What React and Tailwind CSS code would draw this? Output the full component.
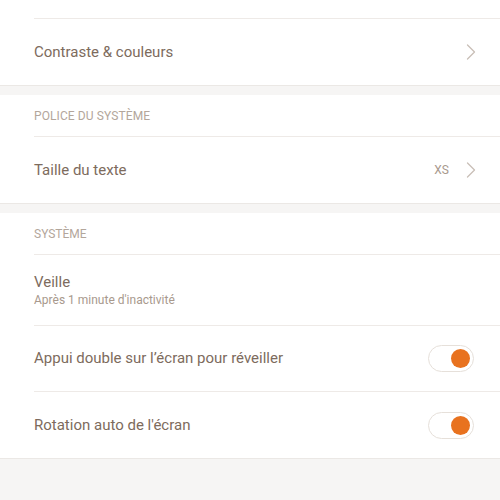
import React from "react";

const Chevron = () => (
  <svg width="10" height="16" viewBox="0 0 10 16" fill="none" className="ml-4">
    <path d="M1.5 1 L8.5 8 L1.5 15" stroke="#c9bfb7" strokeWidth="1.3" strokeLinecap="round" strokeLinejoin="round" />
  </svg>
);

const Toggle = () => (
  <div className="w-[46px] h-[27px] rounded-full border border-[#e6e0da] bg-white flex items-center justify-end pr-[3px]">
    <div className="w-[19px] h-[19px] rounded-full bg-[#e8721f]" />
  </div>
);

const Divider = () => <div className="ml-[34px] h-px bg-[#eeeae7]" />;

export default function App() {
  return (
    <div className="w-[500px] h-[500px] overflow-hidden bg-[#f6f5f4] text-[#7d6b5d]" style={{ fontFamily: "Roboto, 'Noto Sans', sans-serif" }}>
      <div className="bg-white border-b border-[#ebe8e5]">
        <div className="h-[18px]" />
        <Divider />
        <div className="h-[66px] pl-[34px] pr-[24px] flex items-center justify-between">
          <span className="text-[15px]">Contraste &amp; couleurs</span>
          <Chevron />
        </div>
      </div>
      <div className="h-[9px]" />
      <div className="bg-white border-b border-[#ebe8e5]">
        <div className="h-[41px] pl-[34px] flex items-center text-[12px] text-[#b3a69b] tracking-[0.1px]">POLICE DU SYSTÈME</div>
        <Divider />
        <div className="h-[66px] pl-[34px] pr-[24px] flex items-center justify-between">
          <span className="text-[15px]">Taille du texte</span>
          <div className="flex items-center">
            <span className="text-[12px] text-[#a8998d] mr-[1px]">XS</span>
            <Chevron />
          </div>
        </div>
      </div>
      <div className="h-[9px]" />
      <div className="bg-white border-b border-[#ebe8e5]">
        <div className="h-[41px] pl-[34px] flex items-center text-[12px] text-[#b3a69b]">SYSTÈME</div>
        <Divider />
        <div className="h-[70px] pl-[34px] pr-[25px] flex flex-col justify-center">
          <span className="text-[15px] leading-[20px]">Veille</span>
          <span className="text-[12px] leading-[16px] text-[#a8998d]">Après 1 minute d'inactivité</span>
        </div>
        <Divider />
        <div className="h-[65px] pl-[34px] pr-[26px] flex items-center justify-between">
          <span className="text-[15px]">Appui double sur l’écran pour réveiller</span>
          <Toggle />
        </div>
        <Divider />
        <div className="h-[66px] pl-[34px] pr-[26px] flex items-center justify-between">
          <span className="text-[15px]">Rotation auto de l'écran</span>
          <Toggle />
        </div>
      </div>
    </div>
  );
}
